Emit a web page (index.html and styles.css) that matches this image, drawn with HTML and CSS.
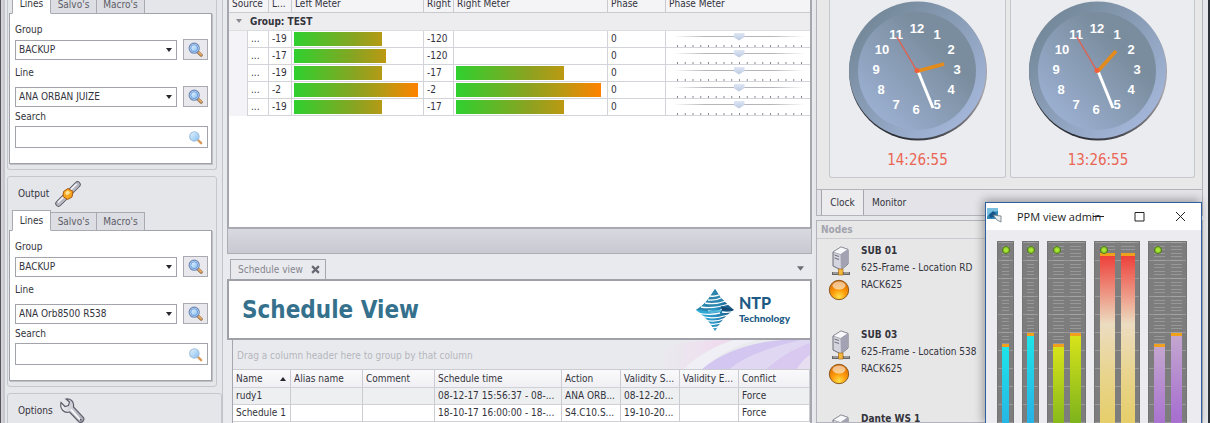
FILE: index.html
```html
<!DOCTYPE html>
<html lang="en">
<head>
<meta charset="utf-8">
<title>Router control</title>
<link rel="stylesheet" href="styles.css">
</head>
<body>
<svg class="defs" aria-hidden="true">
  <defs>
    <linearGradient id="lens" x1="0" y1="0" x2="1" y2="1"><stop offset="0" stop-color="#e8f5ff"/><stop offset="1" stop-color="#86bdf0"/></linearGradient>
    <linearGradient id="steel" x1="0" y1="0" x2="1" y2="0"><stop offset="0" stop-color="#f2f2f6"/><stop offset="1" stop-color="#a9a9b6"/></linearGradient>
    <radialGradient id="ball" cx=".5" cy=".85" r=".8"><stop offset="0" stop-color="#ffe04a"/><stop offset=".45" stop-color="#ff9d0c"/><stop offset="1" stop-color="#d96a00"/></radialGradient>
    <linearGradient id="rim" x1="0" y1="0" x2="1" y2="1"><stop offset=".15" stop-color="#75899b"/><stop offset=".85" stop-color="#a2b5d8"/></linearGradient>
    <linearGradient id="edge" x1=".8" y1="0" x2=".3" y2="1"><stop offset="0" stop-color="#9aa0aa"/><stop offset=".45" stop-color="#a9a4a8"/><stop offset="1" stop-color="#22262e"/></linearGradient>
    <linearGradient id="face" x1="1" y1="0" x2="0" y2="1"><stop offset=".3" stop-color="#7a8d9e"/><stop offset=".9" stop-color="#9db1d4"/></linearGradient>
    <linearGradient id="dia" x1="0" y1="0" x2="1" y2="0"><stop offset="0" stop-color="#35b6dd"/><stop offset=".5" stop-color="#2a93c4"/><stop offset="1" stop-color="#124a74"/></linearGradient>
    <linearGradient id="veil" x1="0" y1="0" x2="1" y2="0"><stop offset="0" stop-color="#f3dff2" stop-opacity="0"/><stop offset="1" stop-color="#f0d6ee"/></linearGradient>
  </defs>
  <symbol id="magnifier" viewBox="0 0 16 16">
    <path d="M10.2 10.2 14 14" stroke="#8a6a4a" stroke-width="3.4" stroke-linecap="round"/>
    <path d="M10.8 10.4 14 13.6" stroke="#e8a860" stroke-width="2" stroke-linecap="round"/>
    <circle cx="6.6" cy="6.6" r="5.4" fill="#cfe2f7" stroke="#6a86b4" stroke-width="1.2"/>
    <circle cx="6.6" cy="6.6" r="3.7" fill="url(#lens)" stroke="#5f96d8" stroke-width="1"/>
  </symbol>
  <symbol id="magnifier-soft" viewBox="0 0 16 16">
    <path d="M10.4 10.4 14 14" stroke="#d79a58" stroke-width="2.6" stroke-linecap="round"/>
    <circle cx="6.8" cy="6.8" r="5" fill="url(#lens)" stroke="#9dc0dd" stroke-width="1.2"/>
  </symbol>
  <symbol id="server" viewBox="0 0 20 30">
    <path d="M2 6 10 1 17 3.500 17 18 10 24 2 20Z" fill="#d4d4de" stroke="#6c6c78" stroke-width="1"/>
    <path d="M2 6 10 1 17 3.500 9.500 8.500Z" fill="#f8f8fb" stroke="#85858f" stroke-width=".6"/>
    <path d="M9.500 8.500 17 3.500V18L10 24Z" fill="#a2a2b2"/>
    <path d="M3.500 9 8 10.500M3.500 12 8 13.500" stroke="#70707c" stroke-width="1"/>
    <path d="M1 27.500H19" stroke="#666" stroke-width="3"/>
    <path d="M2 27H7M13 27H18" stroke="#ccc" stroke-width="1"/>
    <path d="M7.500 23H12V29H7.500Z" fill="#f4b93c" stroke="#a66c1c" stroke-width=".7"/>
  </symbol>
  <symbol id="status" viewBox="0 0 22 22">
    <circle cx="11" cy="11" r="9.700" fill="url(#ball)" stroke="#8f5a1c" stroke-width="1"/>
    <ellipse cx="11" cy="6.500" rx="6.500" ry="4" fill="#fff" opacity=".55"/>
  </symbol>
  <symbol id="dial" viewBox="0 0 140 142">
    <circle cx="70" cy="71.500" r="69" fill="url(#edge)"/>
    <circle cx="69.500" cy="70" r="68.500" fill="url(#rim)"/>
    <circle cx="69" cy="71" r="59" fill="url(#face)"/>
  </symbol>
  <symbol id="scale" viewBox="0 0 125 2"><path d="M0 1H125" stroke="#8b8b90" stroke-width="2" stroke-dasharray="1 6.750"/></symbol>
</svg>

<div class="app">
  <aside class="side">
    <section class="card first">
      <div class="tabs"><button class="tab on">Lines</button><button class="tab">Salvo's</button><button class="tab mac">Macro's</button></div>
      <div class="pane">
        <label for="g1">Group</label>
        <div class="pick"><div class="combo"><select id="g1"><option>BACKUP</option></select><svg class="caret" viewBox="0 0 6 4"><path d="M0 0H6L3 4Z"/></svg></div><button class="find" aria-label="Find group"><svg><use href="#magnifier"/></svg></button></div>
        <label for="l1">Line</label>
        <div class="pick"><div class="combo"><select id="l1"><option>ANA ORBAN JUIZE</option></select><svg class="caret" viewBox="0 0 6 4"><path d="M0 0H6L3 4Z"/></svg></div><button class="find" aria-label="Find line"><svg><use href="#magnifier"/></svg></button></div>
        <label class="tight" for="s1">Search</label>
        <div class="search"><input id="s1" type="text"><svg><use href="#magnifier-soft"/></svg></div>
      </div>
    </section>
    <section class="card">
      <h2 class="cap">Output
        <svg class="plug" viewBox="0 0 26 26"><path d="M3.500 22.500 10 16M16 10 22.500 3.500" stroke="#55555f" stroke-width="6.400" stroke-linecap="round"/><path d="M3.500 22.500 10 16M16 10 22.500 3.500" stroke="#b9b9c4" stroke-width="4.600" stroke-linecap="round"/><path d="M3 21.500 9 15.500M15.500 9 21.500 3" stroke="#f6f6fa" stroke-width="1.500"/><path d="M13 7.500 18 10.500 17 16 12.500 18.500 8 15.500 8.500 10.500Z" fill="#f7a71e" stroke="#a85a10" stroke-width="1"/><path d="M12.500 9.500 15.500 11.500 12 14.500 10 12Z" fill="#ffe39a"/></svg>
      </h2>
      <div class="tabs"><button class="tab on">Lines</button><button class="tab">Salvo's</button><button class="tab mac">Macro's</button></div>
      <div class="pane">
        <label for="g2">Group</label>
        <div class="pick"><div class="combo"><select id="g2"><option>BACKUP</option></select><svg class="caret" viewBox="0 0 6 4"><path d="M0 0H6L3 4Z"/></svg></div><button class="find" aria-label="Find group"><svg><use href="#magnifier"/></svg></button></div>
        <label for="l2">Line</label>
        <div class="pick"><div class="combo"><select id="l2"><option>ANA Orb8500 R538</option></select><svg class="caret" viewBox="0 0 6 4"><path d="M0 0H6L3 4Z"/></svg></div><button class="find" aria-label="Find line"><svg><use href="#magnifier"/></svg></button></div>
        <label class="tight" for="s2">Search</label>
        <div class="search"><input id="s2" type="text"><svg><use href="#magnifier-soft"/></svg></div>
      </div>
    </section>
    <section class="card wide">
      <h2 class="cap">Options
        <svg class="plug" viewBox="0 0 26 26"><path d="M2 4.500 6 8.500 9.500 7.500 10.500 4 7 1C11 .2 15.500 3 14.500 9L24.500 19.500C26 22 23 25.500 20 24L10.500 14C5 15.500.5 11 2 4.500Z" fill="url(#steel)" stroke="#60606c" stroke-width="1.200"/><path d="M12 11.500 21 21.500" stroke="#fff" stroke-width="1.500"/><circle cx="21.800" cy="21.800" r="1" fill="#666"/></svg>
      </h2>
    </section>
  </aside>

  <main class="mid">
    <section class="meters">
      <table class="grid">
        <colgroup><col class="w-ind"><col class="w-src"><col class="w-l"><col class="w-lm"><col class="w-r"><col class="w-rm"><col class="w-p"><col></colgroup>
        <thead><tr><th colspan="2">Source</th><th>L...</th><th>Left Meter</th><th>Right</th><th>Right Meter</th><th>Phase</th><th>Phase Meter</th></tr></thead>
        <tbody>
          <tr class="group"><td colspan="8"><svg class="fold" viewBox="0 0 6 4"><path d="M0 0H6L3 4Z"/></svg>Group: TEST</td></tr>
          <tr><td class="ind"></td><td>...</td><td>-19</td><td class="m"><div class="bar" style="width:88px"></div></td><td>-120</td><td class="m"></td><td>0</td><td class="ph"><input type="range" aria-label="Phase 1"><svg><use href="#scale"/></svg></td></tr>
          <tr><td class="ind"></td><td>...</td><td>-17</td><td class="m"><div class="bar" style="width:92px"></div></td><td>-120</td><td class="m"></td><td>0</td><td class="ph"><input type="range" aria-label="Phase 2"><svg><use href="#scale"/></svg></td></tr>
          <tr><td class="ind"></td><td>...</td><td>-19</td><td class="m"><div class="bar" style="width:88px"></div></td><td>-17</td><td class="m"><div class="bar r" style="width:108px"></div></td><td>0</td><td class="ph"><input type="range" aria-label="Phase 3"><svg><use href="#scale"/></svg></td></tr>
          <tr><td class="ind"></td><td>...</td><td>-2</td><td class="m"><div class="bar" style="width:124px"></div></td><td>-2</td><td class="m"><div class="bar r" style="width:145px"></div></td><td>0</td><td class="ph"><input type="range" aria-label="Phase 4"><svg><use href="#scale"/></svg></td></tr>
          <tr><td class="ind"></td><td>...</td><td>-19</td><td class="m"><div class="bar" style="width:88px"></div></td><td>-17</td><td class="m"><div class="bar r" style="width:108px"></div></td><td>0</td><td class="ph"><input type="range" aria-label="Phase 5"><svg><use href="#scale"/></svg></td></tr>
        </tbody>
      </table>
    </section>
    <div class="strip"></div>
    <div class="docbar">
      <div class="doc">Schedule view <button aria-label="Close tab"><svg viewBox="0 0 8 8"><path d="M1 1 7 7M7 1 1 7" stroke="#666872" stroke-width="2"/></svg></button></div>
      <svg class="more" viewBox="0 0 6 4"><path d="M0 0H6L3 4Z"/></svg>
    </div>
    <header class="banner">
      <h1>Schedule View</h1>
      <div class="brand">
        <svg viewBox="0 0 40 44">
          <path d="M20 1 26 10Q33 17 39 22Q31 27 26 34L20 43 14 34Q8 27 1 22Q9 17 14 10Z" fill="url(#dia)"/>
          <path d="M20 1 26 10 30 14Q20 17 13 23L1 22Q9 17 14 10Z" fill="#2d86ad"/>
          <g stroke="#fff" fill="none" stroke-width="1.300"><path d="M15 8Q21 9 26 6M13 12Q21 13 28 9M10 15Q20 17 31 13M6 19Q18 21 34 16M13 23Q21 25 28 21M1 24.500Q13 28 25 25M27 24Q34 25 39 23M5 28Q18 32 33 27M10 32Q20 35 31 30M12 35.500Q20 38 29 33.500M15 39Q20 41 26 37"/></g>
          <path d="M26 18 39 22 27 23Z" fill="#124a74"/><path d="M13 23 26 22 26 24 13 24.500Z" fill="#4fb7d8"/>
        </svg>
        <div class="brand-name"><b>NTP</b><span>Technology</span></div>
      </div>
    </header>
    <section class="sched">
      <div class="drop"><span>Drag a column header here to group by that column</span>
        <svg viewBox="0 0 150 29" preserveAspectRatio="none"><path d="M0 29V8C20 2 40 0 70 0H72C50 8 34 18 24 29Z" fill="url(#veil)"/><path d="M42 29C62 12 92 2 122 0H142C115 6 85 16 70 29Z" fill="#d3c6f0"/><path d="M70 29C88 14 118 5 142 0H150V3C132 9 114 20 106 29Z" fill="#e0d7f2"/><path d="M106 29C118 18 134 8 150 3V15C144 19 140 24 137 29Z" fill="#d9c9f0"/><path d="M137 29C140 24 144 19 150 15V29Z" fill="#e8def2"/><path d="M24 29C38 15 56 6 74 0H96C74 6 58 15 42 29Z" fill="#f0eff5"/></svg>
      </div>
      <table class="list">
        <colgroup><col class="s1"><col class="s2"><col class="s2"><col class="s3"><col class="s4"><col class="s4"><col class="s4"><col></colgroup>
        <thead><tr><th>Name<svg class="asc" viewBox="0 0 6 4"><path d="M0 4H6L3 0Z"/></svg></th><th>Alias name</th><th>Comment</th><th>Schedule time</th><th>Action</th><th>Validity S...</th><th>Validity E...</th><th>Conflict</th></tr></thead>
        <tbody>
          <tr class="alt"><td>rudy1</td><td></td><td></td><td>08-12-17 15:56:37 - 08-...</td><td>ANA ORB...</td><td>08-12-20...</td><td></td><td>Force</td></tr>
          <tr><td>Schedule 1</td><td></td><td></td><td>18-10-17 16:00:00 - 18-...</td><td>S4.C10.S...</td><td>19-10-20...</td><td></td><td>Force</td></tr>
        </tbody>
      </table>
    </section>
  </main>

  <aside class="right">
    <section class="clocks">
      <div class="clock-row">
        <div class="clock"><svg viewBox="0 0 140 142"><use href="#dial"/>
          <g class="dial-num"><text x="69" y="33">12</text><text x="89" y="39">1</text><text x="103" y="54">2</text><text x="109" y="74">3</text><text x="103" y="94">4</text><text x="89" y="109">5</text><text x="68" y="114">6</text><text x="48" y="109">7</text><text x="33" y="94">8</text><text x="28" y="74">9</text><text x="34" y="54">10</text><text x="48" y="39">11</text></g>
          <path d="M70 71 85 108" stroke="#fff" stroke-width="3"/><path d="M70 71 96 64" stroke="#e38b1b" stroke-width="3.500"/><path d="M69 71 49 37" stroke="#e0604f" stroke-width="1.400"/><circle cx="69" cy="70.500" r="2.500" fill="#f2603a"/></svg><time>14:26:55</time></div>
        <div class="clock two"><svg viewBox="0 0 140 142"><use href="#dial"/>
          <g class="dial-num"><text x="69" y="33">12</text><text x="89" y="39">1</text><text x="103" y="54">2</text><text x="109" y="74">3</text><text x="103" y="94">4</text><text x="89" y="109">5</text><text x="68" y="114">6</text><text x="48" y="109">7</text><text x="33" y="94">8</text><text x="28" y="74">9</text><text x="34" y="54">10</text><text x="48" y="39">11</text></g>
          <path d="M70 71 85 108" stroke="#fff" stroke-width="3"/><path d="M70 71 88 51" stroke="#e38b1b" stroke-width="3.500"/><path d="M69 71 49 37" stroke="#e0604f" stroke-width="1.400"/><circle cx="69" cy="70.500" r="2.500" fill="#f2603a"/></svg><time>13:26:55</time></div>
      </div>
      <div class="foot-tabs"><button class="on">Clock</button><button>Monitor</button></div>
    </section>
    <section class="nodes">
      <h2>Nodes</h2>
      <article><div class="pics"><svg class="srv"><use href="#server"/></svg><svg class="led"><use href="#status"/></svg></div><div><h3>SUB 01</h3><p>625-Frame - Location RD</p><p>RACK625</p></div></article>
      <article><div class="pics"><svg class="srv"><use href="#server"/></svg><svg class="led"><use href="#status"/></svg></div><div><h3>SUB 03</h3><p>625-Frame - Location 538</p><p>RACK625</p></div></article>
      <article><div class="pics"><svg class="srv"><use href="#server"/></svg><svg class="led"><use href="#status"/></svg></div><div><h3>Dante WS 1</h3></div></article>
    </section>
  </aside>

  <section class="popup" aria-label="PPM view">
    <header>
      <svg class="logo" viewBox="0 0 16 16"><path d="M1 1H12V12H1Z" fill="#3488b8"/><path d="M1 1H12V4L4 6 1 10Z" fill="#79c0e0"/><path d="M3 8 7 4 10 6 8 10 4 11Z" fill="#14558a"/><path d="M7 8 15 9V15L11 13Z" fill="#e7eef2" stroke="#66727c" stroke-width=".8"/></svg>
      <span class="name">PPM view admin</span>
      <span class="win"><button aria-label="Minimize"><svg viewBox="0 0 11 11"><path d="M0 5.500H11"/></svg></button><button aria-label="Maximize"><svg viewBox="0 0 11 11"><path d="M1 1.500H10V10H1Z"/></svg></button><button aria-label="Close"><svg viewBox="0 0 11 11"><path d="M1 1 10 10M10 1 1 10"/></svg></button></span>
    </header>
    <div class="ppm">
      <div class="unit n cyan"><i></i><div class="track"><b style="margin-top:102px"></b></div></div>
      <div class="unit n cyan"><i></i><div class="track"><b style="margin-top:91px"></b></div></div>
      <div class="unit green"><i></i><div class="track"><b style="margin-top:102px"></b></div><div class="track"><b style="margin-top:91px"></b></div></div>
      <div class="unit big hot"><i></i><div class="track"><b style="margin-top:11px"></b></div><div class="track"><b style="margin-top:11px"></b></div></div>
      <div class="unit violet"><i></i><div class="track"><b style="margin-top:102px"></b></div><div class="track"><b style="margin-top:91px"></b></div></div>
    </div>
  </section>
</div>
</body>
</html>
```

FILE: styles.css
```css
* { box-sizing: border-box; }
body { margin: 0; font: 10px/17px "DejaVu Sans Condensed", "Noto Sans", sans-serif; color: #33333c; background: #e6e7ea; }
button, select, input { font: inherit; color: inherit; margin: 0; padding: 0; }
h1, h2, h3, p { margin: 0; font: inherit; }
svg { display: block; fill: none; }
.defs { position: absolute; width: 0; height: 0; }
.app { position: relative; display: flex; height: 100vh; overflow: hidden; border-left: 1px solid #55545a; border-right: 2px solid #2c3138; }

/* Sidebar */
.side { flex: 0 0 222px; display: flex; flex-direction: column; gap: 6px; padding: 0 5px 0 6px; border-left: 2px solid #d2d2d8; border-right: 1px solid #c3c4ca; box-shadow: inset 2px 0 #c6c6cc; }
.card { flex: none; border: 1px solid #c6c7cd; border-radius: 3px; padding: 0 4px 5px 1px; background: #e5e6ea; margin-left: -2px; }
.card.first { border-top: 0; border-radius: 0 0 3px 3px; }
.card.wide { margin-right: -5px; height: 60px; }
.cap { display: flex; align-items: center; gap: 6px; height: 33px; padding-left: 9px; }
.plug { width: 26px; height: 26px; }
.tabs { display: flex; align-items: flex-end; height: 21px; padding-left: 3px; margin-bottom: -1px; }
.first .tabs { height: 14px; }
.tab { width: 46px; height: 19px; border: 1px solid #a9aab1; border-left: 0; background: #dddee3; color: #5c5c66; }
.tab.mac { width: 48px; }
.tab.on { width: 39px; height: 21px; border-left: 1px solid #a9aab1; border-bottom-color: #fff; background: #fff; color: #33333c; z-index: 1; }
.pane { border: 1px solid #a0a1a9; box-shadow: 1px 1px #c0c1c7; background: #fff; height: 151px; padding: 6px 3px 0 5px; display: flex; flex-direction: column; }
.pane label { line-height: 19px; }
.pick + label { margin-top: 3px; margin-bottom: 4px; }
.pick + label.tight { margin: 0; }
.pick { display: flex; gap: 6px; align-items: center; height: 21px; }
.combo { position: relative; flex: 1; }
.combo select { display: block; width: 100%; height: 20px; border: 1px solid #a3a4ab; border-radius: 0; background: #fff; appearance: none; padding-left: 3px; }
.caret { position: absolute; right: 5px; top: 8px; width: 6px; height: 4px; pointer-events: none; fill: #26262c; }
.find { width: 25px; height: 21px; display: grid; place-items: center; border: 1px solid #a9aab2; background: #e8e8ed; }
.find svg, .search svg { width: 15px; height: 15px; }
.search { display: flex; align-items: center; height: 22px; border: 1px solid #a3a4ab; padding-right: 4px; }
.search input { flex: 1; min-width: 0; border: 0; background: none; }

/* Level grid */
.mid { flex: 1; min-width: 0; display: flex; flex-direction: column; padding: 0 2px 0 4px; background: #e9eaee; }
.meters { height: 228px; flex: none; background: #fff; border: solid #a5a6ae; border-width: 0 2px 1px; }
table { border-collapse: separate; border-spacing: 0; table-layout: fixed; width: 100%; }
th { font-weight: normal; text-align: left; }
th, td { padding: 0 0 0 3px; white-space: nowrap; overflow: hidden; }
.grid th { height: 13px; line-height: 8px; padding-bottom: 4px; border-right: 1px solid #c9cad0; border-bottom: 1px solid #c9cad0; background: #f4f4f7; }
.grid td { height: 17px; line-height: 16px; border-right: 1px solid #d3d4d9; border-bottom: 1px solid #d3d4d9; }
.grid td:nth-child(2) { border-left: 1px solid #d3d4d9; }
.grid .group td { height: 18px; background: #ededf0; font-weight: bold; padding-left: 7px; border-bottom-color: #dcdde1; }
.grid .ind { background: #f4f4f8; border-right: 0; border-bottom-color: #f4f4f8; }
.grid th:last-child, .grid td:last-child { border-right: 0; }
.fold { display: inline-block; width: 6px; height: 4px; margin: 0 8px 2px 0; fill: #8a8b92; }
.w-ind { width: 18px; } .w-src { width: 22px; } .w-l { width: 23px; } .w-lm { width: 132px; } .w-r { width: 30px; } .w-rm { width: 154px; } .w-p { width: 58px; }
.grid .m { padding: 0 0 0 2px; }
.bar { height: 14px; background: linear-gradient(90deg, #2fd02f, #8aa321 62px, #b99913 90px, #ff8200 124px) left / 124px; }
.bar.r { background: linear-gradient(90deg, #2fd02f, #8aa321 72px, #b99913 106px, #ff8200 145px) left / 145px; }
.grid .ph { padding: 0 5px 0 7px; }
.ph input { display: block; appearance: none; width: 100%; height: 10px; background: linear-gradient(90deg, #fff0, #b5b5ba 25%, #b5b5ba 75%, #fff0) center / 100% 1px no-repeat; }
.ph input::-webkit-slider-thumb { appearance: none; width: 11px; height: 8px; background: linear-gradient(#dfe7f5, #b9c7df); clip-path: polygon(0 0, 100% 0, 100% 55%, 50% 100%, 0 55%); }
.ph svg { width: 125px; height: 2px; margin: 3px 0 0 4px; }

.strip { flex: none; height: 26px; border: 1px solid #abacb4; background: linear-gradient(#d9dae0, #c8c9d1); }
.docbar { flex: none; height: 25px; display: flex; align-items: flex-end; justify-content: space-between; padding: 0 8px 0 3px; }
.doc { display: flex; align-items: center; justify-content: space-between; width: 96px; height: 20px; padding: 0 5px 0 7px; border: 1px solid #a5a6ae; border-bottom: 0; color: #85868e; }
.doc button { border: 0; background: none; }
.doc svg { width: 9px; height: 9px; }
.more { width: 7px; height: 5px; margin-bottom: 8px; fill: #6c6d75; }
.banner { flex: none; height: 61px; display: flex; align-items: center; justify-content: space-between; padding: 0 20px 0 13px; border: 2px solid #9fa0a8; background: #fff; }
.banner h1 { font: bold 24px/30px "DejaVu Sans Condensed", "Noto Sans", sans-serif; color: #35718c; }
.brand { display: flex; align-items: center; gap: 4px; }
.brand svg { width: 40px; height: 44px; }
.brand-name { display: flex; flex-direction: column; color: #1d5a84; font-family: Lato, sans-serif; font-weight: 900; }
.brand-name b { font: 900 16px/18px Lato, sans-serif; }
.brand-name span { font-size: 10px; line-height: 13px; }

/* Schedule list */
.sched { flex: 1; margin-left: 5px; border: solid #a5a6ae; border-width: 0 2px 0 1px; background: #fff; }
.drop { display: flex; justify-content: space-between; height: 29px; padding-left: 4px; line-height: 31px; background: #e9eaee; color: #b5b6bd; }
.drop svg { width: 150px; height: 29px; }
.list th, .list td { border-right: 1px solid #cbccd2; border-bottom: 1px solid #d0d1d6; line-height: 16px; height: 17px; }
.list th { height: 19px; border-top: 1px solid #cbccd2; background: linear-gradient(#fafafc, #f0f0f4); }
.list .alt td { background: #eeeff1; }
.asc { float: right; width: 6px; height: 4px; margin: 6px 4px 0 0; fill: #26262c; }
.s1 { width: 58px; } .s2 { width: 72px; } .s3 { width: 127px; } .s4 { width: 59px; }

/* Clocks and nodes */
.right { flex: 0 0 394px; display: flex; flex-direction: column; gap: 4px; padding: 0 5px 0 2px; }
.clocks { flex: none; border: 1px solid #b2b3bb; border-top: 0; background: #e8e8e9; }
.clock-row { display: grid; grid-template-columns: 177px 1fr; gap: 4px; height: 190px; padding: 0 7px 11px 12px; border-bottom: 1px solid #b2b3bb; }
.clock { border: 1px solid #c6c7cd; border-top: 0; border-radius: 0 0 3px 3px; background: #ebecef; display: flex; flex-direction: column; align-items: center; }
.clock.two { padding-right: 9px; }
.clock svg { width: 140px; height: 142px; }
.clock time { font-size: 15px; line-height: 20px; margin-top: 8px; color: #ea6554; }
.dial-num { fill: #fff; font: bold 13px "Liberation Sans", sans-serif; text-anchor: middle; }
.foot-tabs { display: flex; height: 25px; padding-left: 4px; background: #e4e4e8; }
.foot-tabs button { border: 0; background: none; padding: 0 8px; border-right: 1px solid transparent; }
.foot-tabs .on { width: 43px; border-right-color: #a5a6ae; border-left: 1px solid #a5a6ae; background: #ececee; padding: 0; }
.nodes { flex: 1; min-height: 0; overflow: hidden; border: 1px solid #b2b3bb; background: #e7e7e8; }
.nodes h2 { font-weight: bold; color: #a3a4ad; line-height: 17px; padding-left: 4px; border-bottom: 1px solid #cbccd1; }
.nodes article { display: flex; height: 84px; padding-top: 3px; padding-left: 7px; }
.pics { width: 37px; padding: 4px 0 0 4px; }
.srv { width: 20px; height: 30px; margin-left: 3px; }
.led { width: 22px; height: 22px; margin-top: 3px; }
.nodes h3 { font-weight: bold; }

/* Floating meter window */
.popup { position: absolute; top: 202px; right: 6px; bottom: -2px; width: 217px; border: 1px solid #2f5f9f; background: #ebebf0; box-shadow: -2px -2px 9px #0005; display: flex; flex-direction: column; }
.popup header { display: flex; flex: none; height: 27px; align-items: center; background: #fff; }
.logo { flex: none; width: 16px; height: 16px; margin-bottom: 3px; }
.name { flex: 1; min-width: 0; padding-left: 15px; font: 11px/20px "Open Sans", sans-serif; color: #222; white-space: nowrap; }
.win { display: flex; gap: 30px; padding-right: 15px; }
.win button { border: 0; background: none; }
.win svg { width: 11px; height: 11px; stroke: #222; }
.ppm { flex: 1; display: flex; gap: 8px; padding: 11px 0 0 11px; }
.unit { position: relative; display: flex; gap: 6px; width: 39px; padding: 0 4px 0 5px; border: 1px solid #747474; background: repeating-linear-gradient(#999 0 1px, #7d7d7d 1px 18px); }
.unit.n { width: 17px; padding: 0 4px; }
.unit.big { width: 46px; }
.unit i { position: absolute; left: 5px; top: 4px; width: 8px; height: 8px; border: 1px solid #4c7a16; border-radius: 50%; background: radial-gradient(#b6ee3c, #7cc21c); }
.unit.n i { left: 4px; }
.track { flex: 1; display: flex; background: repeating-linear-gradient(#a4a4a4 0 1px, #7d7d7d 1px 4px, #989898 4px 5px, #7d7d7d 5px 7px, #989898 7px 8px, #7d7d7d 8px 11px, #989898 11px 12px, #7d7d7d 12px 14px, #989898 14px 15px, #7d7d7d 15px 18px); }
.track b { flex: 1; border-top: 3px solid #f0a01c; }
.cyan b { background: linear-gradient(#1ee4e8, #27b4e6 80px); }
.green b { background: linear-gradient(#d7e31a, #7fb41c 85px); }
.hot b { background: linear-gradient(#ee403a, #ecdcc0 68px, #e8d48c 120px, #e6ce6a); }
.violet b { background: linear-gradient(#c3a6cf, #a871d0 80px); }
```
